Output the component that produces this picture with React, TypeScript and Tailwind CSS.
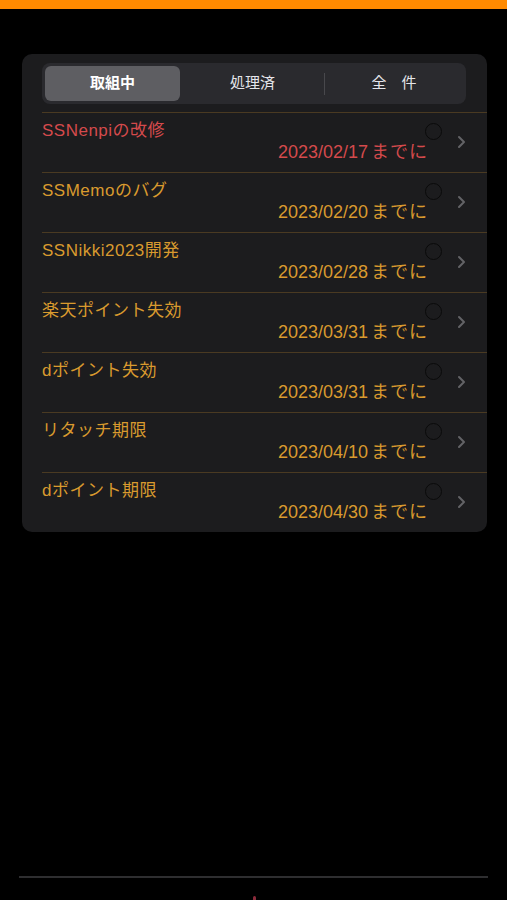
import React, { useState } from 'react';

interface Task {
  title: string;
  due: string;
  overdue?: boolean;
}

const tasks: Task[] = [
  { title: 'SSNenpiの改修', due: '2023/02/17', overdue: true },
  { title: 'SSMemoのバグ', due: '2023/02/20' },
  { title: 'SSNikki2023開発', due: '2023/02/28' },
  { title: '楽天ポイント失効', due: '2023/03/31' },
  { title: 'dポイント失効', due: '2023/03/31' },
  { title: 'リタッチ期限', due: '2023/04/10' },
  { title: 'dポイント期限', due: '2023/04/30' },
];

const tabs = ['取組中', '処理済', '全　件'];

function App() {
  const [tab, setTab] = useState(0);

  return (
    <div
      className="h-[900px] bg-black flex flex-col overflow-hidden"
      style={{ fontFamily: '"Liberation Sans", "Noto Sans CJK JP", sans-serif' }}
    >
      <div className="h-[9px] bg-[#ff8a00] shrink-0" />

      <div className="mt-[45px] mx-[22px] w-[465px] bg-[#1c1c1e] rounded-[10px] pt-[9px] pl-[20px] overflow-hidden">
        {/* segmented control */}
        <div className="mr-[21px] h-[41px] bg-[#2a2a2e] rounded-[8px] p-[3px] grid grid-cols-[135px_145px_1fr] items-stretch">
          {tabs.map((t, i) => (
            <button
              key={t}
              onClick={() => setTab(i)}
              className={`relative flex items-center justify-center text-[15px] rounded-[6px] ${
                tab === i ? 'bg-[#5e5e62] text-white font-bold' : 'text-[#e5e5ea]'
              }`}
            >
              {t}
              {i === 1 && tab !== 1 && tab !== 2 && (
                <span className="absolute right-0 top-[7px] h-[22px] w-px bg-[#48484c]" />
              )}
            </button>
          ))}
        </div>

        {/* task rows */}
        <div className="mt-[8px]">
          {tasks.map((task) => {
            const color = task.overdue ? 'text-[#d44a4c]' : 'text-[#d99a2e]';
            return (
              <div key={task.title + task.due} className="h-[60px] border-t border-[#4a3a22] flex items-center">
                <div className="flex-1 flex flex-col h-full">
                  <div className="flex justify-between items-start pt-[8px]">
                    <span className={`text-[17px] leading-[20px] tracking-[0.5px] ${color}`}>{task.title}</span>
                    <span className="mt-[2px] w-[17px] h-[17px] rounded-full border-[1.5px] border-[#0a0a0a]" />
                  </div>
                  <div className={`text-right pr-[14px] text-[18px] leading-[22px] ${color}`}>
                    {task.due}
                    <span className="ml-[3px] tracking-[1px]">までに</span>
                  </div>
                </div>
                <svg width="9" height="14" viewBox="0 0 9 14" className="ml-[15px] mr-[21px] -mt-[1px]">
                  <path d="M2 2l5 5-5 5" fill="none" stroke="#636366" strokeWidth="2" strokeLinecap="round" strokeLinejoin="round" />
                </svg>
              </div>
            );
          })}
        </div>
      </div>

      <div className="flex-1" />
      <div className="mx-[19px] h-[2px] bg-[#2e2e30]" />
      <div className="h-[22px] flex justify-center items-end">
        <div className="w-[3px] h-[4px] bg-[#8a2a3a] rounded-t-sm ml-[2px]" />
      </div>
    </div>
  );
}

export default App;
